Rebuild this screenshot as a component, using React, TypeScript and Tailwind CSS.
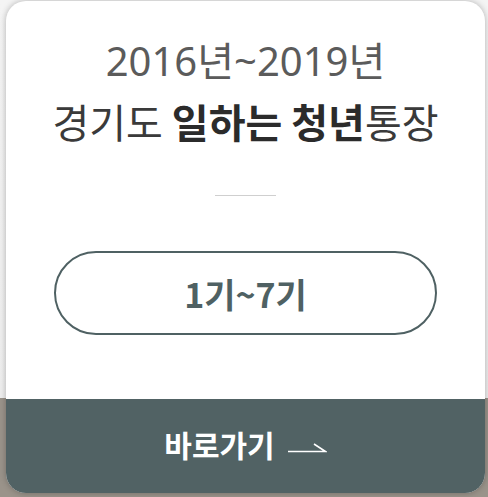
export default function App() {
  const font = { fontFamily: '"Noto Sans CJK KR", "Noto Sans", sans-serif' };
  const latin = { fontFamily: '"Noto Sans", "Noto Sans CJK KR", sans-serif' };

  return (
    <div
      className="w-[488px] h-[497px] pl-[6px] pr-[3px] pt-[1px] pb-[4px] bg-[linear-gradient(to_bottom,#f4f4f4_0px,#eeeeee_398px,#9a938a_398px,#9a938a_100%)]"
      style={font}
    >
      <div className="h-full flex flex-col rounded-[20px] overflow-hidden bg-white shadow-[0_0_6px_rgba(0,0,0,0.28)]">
        {/* Top */}
        <div className="flex-1 flex flex-col items-center pt-[30px]">
          <p className="text-[40px] leading-[60px] text-[#5b5b5b] font-normal" style={latin}>
            2016년~2019년
          </p>
          <p className="text-[40px] leading-[60px] text-[#3a3a3a]">
            경기도 <b className="font-bold text-[#2b2b2b]">일하는 청년</b>통장
          </p>
          <div className="mt-[44px] w-[61px] h-px bg-[#cfcfcf]" />
          <button className="mt-[55px] w-[383px] h-[84px] rounded-full border-2 border-[#4f6163] flex items-center justify-center text-[34px] font-bold text-[#4f6163]">
            1기~7기
          </button>
        </div>

        {/* Bottom bar */}
        <div className="h-[94px] bg-[#516264] flex items-center justify-center gap-[12px] pb-[4px]">
          <span className="text-[30px] font-bold text-white">바로가기</span>
          <svg width="40" height="12" viewBox="0 0 40 12" className="mt-[6px]">
            <path d="M1 10.5 H38.5 L27 3" fill="none" stroke="#ffffff" strokeWidth="1.6" />
          </svg>
        </div>
      </div>
    </div>
  );
}
